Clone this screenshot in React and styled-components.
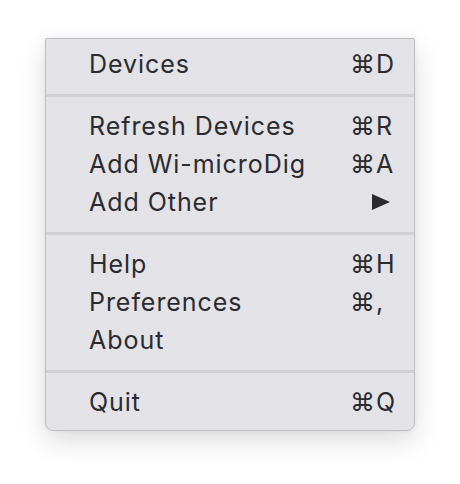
import React from "react"
import styled, { createGlobalStyle } from "styled-components"

const GlobalStyle = createGlobalStyle`
    body {
        margin: 0;
        background: #ffffff;
        font-family: "Inter", "Liberation Sans", sans-serif;
    }
`

const Page = styled.div`
    width: 460px;
    height: 484px;
    padding: 38px 0 0 45px;
    box-sizing: border-box;
`

const Menu = styled.div`
    width: 370px;
    box-sizing: border-box;
    padding: 6px 0 9px;
    background: #e2e2e7;
    border: 1px solid #bdbdc2;
    border-radius: 2px 2px 8px 8px;
    box-shadow: 0 10px 28px rgba(0, 0, 0, 0.14), 0 0 6px rgba(0, 0, 0, 0.05);
`

const Row = styled.div`
    display: flex;
    align-items: center;
    height: 38px;
    padding: 0 14px 0 43px;
    font-size: 25px;
    color: #2b2b2f;
    letter-spacing: 0.95px;
`

const Label = styled.span`
    flex: 1;
`

const Shortcut = styled.span`
    width: 50px;
    display: flex;
    align-items: center;
`

const Arrow = styled.span`
    margin-left: 22px;
    width: 0;
    height: 0;
    border-left: 18px solid #2b2b2f;
    border-top: 8.5px solid transparent;
    border-bottom: 8.5px solid transparent;
`

const Separator = styled.div`
    height: 24px;
    display: flex;
    align-items: center;

    &::after {
        content: "";
        flex: 1;
        height: 3px;
        background: #cfcfd4;
    }
`

const groups = [
    [["Devices", "⌘D"]],
    [
        ["Refresh Devices", "⌘R"],
        ["Add Wi-microDig", "⌘A"],
        ["Add Other", null, true],
    ],
    [
        ["Help", "⌘H"],
        ["Preferences", "⌘,"],
        ["About", ""],
    ],
    [["Quit", "⌘Q"]],
]

function App() {
    return (
        <Page>
            <GlobalStyle />
            <Menu>
                {groups.map((group, i) => (
                    <React.Fragment key={i}>
                        {i > 0 && <Separator />}
                        {group.map(([label, key, submenu]) => (
                            <Row key={label}>
                                <Label>{label}</Label>
                                <Shortcut>{submenu ? <Arrow /> : key}</Shortcut>
                            </Row>
                        ))}
                    </React.Fragment>
                ))}
            </Menu>
        </Page>
    )
}

export default App
